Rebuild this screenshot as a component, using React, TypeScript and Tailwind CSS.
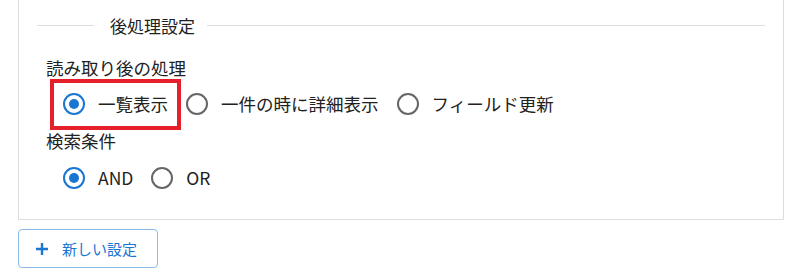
import { useState } from "react";

const font = { fontFamily: '"Noto Sans CJK JP", "Noto Sans", sans-serif' };

function RadioIcon({ checked }: { checked: boolean }) {
  return (
    <svg width="24" height="24" viewBox="0 0 24 24" className="shrink-0">
      <circle
        cx="12"
        cy="12"
        r="10"
        fill="none"
        stroke={checked ? "#1976d2" : "#666666"}
        strokeWidth="2"
      />
      {checked && <circle cx="12" cy="12" r="5" fill="#1976d2" />}
    </svg>
  );
}

function RadioOption({
  label,
  checked,
  onSelect,
  highlight,
}: {
  label: string;
  checked: boolean;
  onSelect: () => void;
  highlight?: boolean;
}) {
  return (
    <label className="relative flex cursor-pointer items-center gap-[12px]" onClick={onSelect}>
      <RadioIcon checked={checked} />
      <span className="whitespace-nowrap text-[17.5px] leading-none text-[#212121]">{label}</span>
      {/* annotation box over the first option */}
      {highlight && (
        <span className="pointer-events-none absolute -top-[13px] -bottom-[14px] -left-[12px] -right-[13px] border-[4px] border-[#e5202a]" />
      )}
    </label>
  );
}

export default function App() {
  const [after, setAfter] = useState("list");
  const [cond, setCond] = useState("and");

  return (
    <div className="h-[280px] w-[796px] bg-white" style={font}>
      {/* outer panel, top edge is scrolled off */}
      <div className="ml-[18px] w-[766px] border-x border-b border-[#dedede] px-[18px] pb-[23px]">
        {/* fieldset-like legend */}
        <div className="flex h-[50px] items-center">
          <div className="h-px w-[57px] bg-[#dedede]" />
          <span className="ml-[16px] mr-[12px] text-[17px] leading-none text-[#212121]">後処理設定</span>
          <div className="h-px flex-1 bg-[#dedede]" />
        </div>

        <div className="pl-[9px]">
          <div className="flex h-[36px] items-center text-[17.5px] text-[#212121]">読み取り後の処理</div>
          <div className="flex h-[36px] items-center gap-[17px] pl-[16px]">
            <RadioOption label="一覧表示" checked={after === "list"} onSelect={() => setAfter("list")} highlight />
            <RadioOption label="一件の時に詳細表示" checked={after === "detail"} onSelect={() => setAfter("detail")} />
            <RadioOption label="フィールド更新" checked={after === "field"} onSelect={() => setAfter("field")} />
          </div>

          <div className="flex h-[38px] items-center text-[17.5px] text-[#212121]">検索条件</div>
          <div className="flex h-[36px] items-center gap-[17px] pl-[16px]">
            <RadioOption label="AND" checked={cond === "and"} onSelect={() => setCond("and")} />
            <RadioOption label="OR" checked={cond === "or"} onSelect={() => setCond("or")} />
          </div>
        </div>
      </div>

      <div className="ml-[18px] mt-[9px]">
        <button className="flex h-[39px] w-[140px] items-center gap-[13px] rounded-[4px] border border-[#8bbbe9] pl-[16px] text-[15px] text-[#1976d2]">
          <svg width="14" height="14" viewBox="0 0 14 14">
            <path d="M7 1v12M1 7h12" stroke="#1976d2" strokeWidth="2.4" />
          </svg>
          <span className="leading-none">新しい設定</span>
        </button>
      </div>
    </div>
  );
}
